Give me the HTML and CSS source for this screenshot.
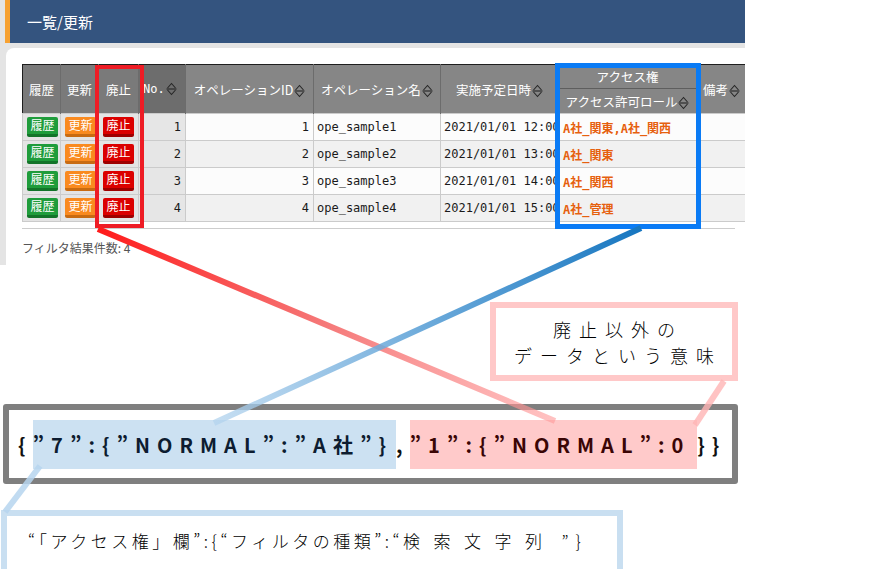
FILE: index.html
```html
<!DOCTYPE html>
<html lang="ja">
<head>
<meta charset="utf-8">
<title>一覧/更新</title>
<link rel="stylesheet" href="styles.css">
</head>
<body>
<div class="page">
  <div class="app">
    <div class="titlebar"><span>一覧/更新</span></div>
    <div class="band"></div>
    <div class="panel">
      <table class="grid">
        <colgroup>
          <col class="c38"><col class="c38"><col class="c40"><col class="c47"><col class="c128"><col class="c127"><col class="c118"><col class="c138"><col class="c60">
        </colgroup>
        <thead>
          <tr class="h1">
            <th rowspan="2" class="hb">履歴</th>
            <th rowspan="2" class="hb">更新</th>
            <th rowspan="2" class="hb">廃止</th>
            <th rowspan="2" class="hno">No.<svg class="sort" viewBox="0 0 11 14"><path d="M1.5 6L5.5 1.5L9.5 6M1.5 8L5.5 12.5L9.5 8"/><path d="M0.5 7H10.5"/></svg></th>
            <th rowspan="2">オペレーションID<svg class="sort" viewBox="0 0 11 14"><path d="M1.5 6L5.5 1.5L9.5 6M1.5 8L5.5 12.5L9.5 8"/><path d="M0.5 7H10.5"/></svg></th>
            <th rowspan="2">オペレーション名<svg class="sort" viewBox="0 0 11 14"><path d="M1.5 6L5.5 1.5L9.5 6M1.5 8L5.5 12.5L9.5 8"/><path d="M0.5 7H10.5"/></svg></th>
            <th rowspan="2">実施予定日時<svg class="sort" viewBox="0 0 11 14"><path d="M1.5 6L5.5 1.5L9.5 6M1.5 8L5.5 12.5L9.5 8"/><path d="M0.5 7H10.5"/></svg></th>
            <th class="grp">アクセス権</th>
            <th rowspan="2" class="memo">備考<svg class="sort" viewBox="0 0 11 14"><path d="M1.5 6L5.5 1.5L9.5 6M1.5 8L5.5 12.5L9.5 8"/><path d="M0.5 7H10.5"/></svg></th>
          </tr>
          <tr class="h2">
            <th class="sub">アクセス許可ロール<svg class="sort" viewBox="0 0 11 14"><path d="M1.5 6L5.5 1.5L9.5 6M1.5 8L5.5 12.5L9.5 8"/><path d="M0.5 7H10.5"/></svg></th>
          </tr>
        </thead>
        <tbody>
          <tr class="odd">
            <td class="bc"><span class="btn green">履歴</span></td>
            <td class="bc"><span class="btn orange">更新</span></td>
            <td class="bc"><span class="btn red">廃止</span></td>
            <td class="num nocell">1</td>
            <td class="num">1</td>
            <td>ope_sample1</td>
            <td>2021/01/01 12:00</td>
            <td class="acc">A社_関東,A社_関西</td>
            <td></td>
          </tr>
          <tr class="even">
            <td class="bc"><span class="btn green">履歴</span></td>
            <td class="bc"><span class="btn orange">更新</span></td>
            <td class="bc"><span class="btn red">廃止</span></td>
            <td class="num nocell">2</td>
            <td class="num">2</td>
            <td>ope_sample2</td>
            <td>2021/01/01 13:00</td>
            <td class="acc">A社_関東</td>
            <td></td>
          </tr>
          <tr class="odd">
            <td class="bc"><span class="btn green">履歴</span></td>
            <td class="bc"><span class="btn orange">更新</span></td>
            <td class="bc"><span class="btn red">廃止</span></td>
            <td class="num nocell">3</td>
            <td class="num">3</td>
            <td>ope_sample3</td>
            <td>2021/01/01 14:00</td>
            <td class="acc">A社_関西</td>
            <td></td>
          </tr>
          <tr class="even">
            <td class="bc"><span class="btn green">履歴</span></td>
            <td class="bc"><span class="btn orange">更新</span></td>
            <td class="bc"><span class="btn red">廃止</span></td>
            <td class="num nocell">4</td>
            <td class="num">4</td>
            <td>ope_sample4</td>
            <td>2021/01/01 15:00</td>
            <td class="acc">A社_管理</td>
            <td></td>
          </tr>
        </tbody>
      </table>
      <div class="rule"></div>
      <div class="count">フィルタ結果件数: 4</div>
    </div>
  </div>

  <div class="mark mark-red"></div>
  <div class="mark mark-blue"></div>

  <div class="note">
    <div class="note-line">廃止以外の</div>
    <div class="note-line">データという意味</div>
  </div>

  <div class="code">
    <span class="plain">{</span><span class="hl-blue">”7”:{”NORMAL”:”A社”}</span><span class="plain">,</span><span class="hl-pink">”1”:{”NORMAL”:0</span><span class="plain">}}</span>
  </div>

  <div class="legend">
    <span>“「アクセス権」欄”:{“フィルタの種類”:“</span><span class="wide">検索文字列</span><span class="tail">”}</span>
  </div>

  <svg class="wires" width="886" height="569" viewBox="0 0 886 569">
    <defs>
      <linearGradient id="gred" gradientUnits="userSpaceOnUse" x1="98" y1="229" x2="555" y2="421">
        <stop offset="0" stop-color="#ff1a1a"/>
        <stop offset="0.5" stop-color="#f46a6a" stop-opacity="0.9"/>
        <stop offset="1" stop-color="#ff9a9a" stop-opacity="0.6"/>
      </linearGradient>
      <linearGradient id="gblue" gradientUnits="userSpaceOnUse" x1="641" y1="228" x2="214" y2="423">
        <stop offset="0" stop-color="#1676c0"/>
        <stop offset="0.5" stop-color="#5ba0d6" stop-opacity="0.9"/>
        <stop offset="1" stop-color="#b4d4ee" stop-opacity="0.75"/>
      </linearGradient>
    </defs>
    <line x1="98" y1="229" x2="555" y2="421" stroke="url(#gred)" stroke-width="6"/>
    <line x1="641" y1="228" x2="214" y2="423" stroke="url(#gblue)" stroke-width="6"/>
    <line x1="724" y1="381" x2="695" y2="425" stroke="#ffb4b4" stroke-opacity="0.8" stroke-width="6"/>
    <line x1="40" y1="466" x2="5" y2="512" stroke="#b6d5ee" stroke-opacity="0.85" stroke-width="6"/>
  </svg>
</div>
</body>
</html>
```

FILE: styles.css
```css
* { box-sizing: border-box; }

body {
  margin: 0;
  background: #ffffff;
  font-family: "Noto Sans CJK JP", "Noto Sans", sans-serif;
  color: #000;
}

.page {
  position: relative;
  width: 886px;
  height: 569px;
  overflow: hidden;
  background: #ffffff;
}

/* ---------- app screenshot ---------- */
.app {
  width: 745px;
  height: 265px;
  background: #e4e4e4;
  overflow: hidden;
  display: flex;
  flex-direction: column;
}

.titlebar {
  height: 43px;
  flex: none;
  margin-left: 5px;
  border-left: 5px solid #f7a130;
  background: #34547f;
  color: #ffffff;
  font-size: 15px;
  display: flex;
  align-items: center;
  padding-left: 17px;
}

.band {
  height: 5px;
  flex: none;
}

.panel {
  flex: 1;
  margin-left: 6px;
  background: #ffffff;
  border-top-left-radius: 8px;
  padding: 16px 0 0 16px;
}

.grid {
  border-collapse: collapse;
  table-layout: fixed;
  width: 734px;
  border-top: 1px solid #1e1e1e;
  border-left: 1px solid #1e1e1e;
  border-bottom: 1px solid #1e1e1e;
  font-family: "DejaVu Sans Mono", "Noto Sans CJK JP", monospace;
  font-size: 12px;
}

.c38 { width: 38px; }
.c40 { width: 40px; }
.c47 { width: 47px; }
.c128 { width: 128px; }
.c127 { width: 127px; }
.c118 { width: 118px; }
.c138 { width: 138px; }
.c60 { width: 98px; }

.grid th {
  background: #868686;
  color: #ffffff;
  font-weight: normal;
  font-size: 12.5px;
  font-family: "Noto Sans CJK JP", sans-serif;
  border-right: 1px solid #6c6c6c;
  border-bottom: 1px dotted #2a2a2a;
  padding: 0 2px;
  white-space: nowrap;
  overflow: hidden;
  text-align: center;
}

.grid .h1 { height: 24px; }
.grid .h2 { height: 25px; }

.grid th.hb { background: #7a7a7a; }
.grid th.hno {
  background: #6d6d6d;
  font-family: "DejaVu Sans Mono", monospace;
  font-size: 12px;
  text-align: left;
  padding-left: 4px;
}

.grid th.grp {
  border-bottom: 1px solid #5e5e5e;
  border-right: 1px solid #a8a8a8;
}
.grid th.sub {
  border-right: 1px solid #a8a8a8;
}
.grid th.memo {
  text-align: left;
  padding-left: 6px;
}

.sort {
  width: 11px;
  height: 14px;
  vertical-align: -3px;
  margin-left: 1px;
  fill: none;
  stroke: #262626;
  stroke-width: 1.1;
}

.grid td {
  height: 27px;
  border: 1px solid #cbcbcb;
  padding: 0 3px;
  white-space: nowrap;
  overflow: hidden;
  color: #1a1a1a;
}

.grid tr.odd td { background: #fcfcfc; }
.grid tr.even td { background: #f1f1f1; }
.grid tr td.bc { background: #e4e4e4; padding: 3px 0 0 4px; vertical-align: top; }
.grid tr td.nocell { background: #e6e6e6; }
.grid td.num { text-align: right; padding-right: 4px; }
.grid td.acc {
  color: #e6600e;
  font-weight: bold;
  padding-left: 4px;
}

.btn {
  display: inline-block;
  width: 31px;
  height: 20px;
  border-radius: 2px;
  color: #ffffff;
  font-family: "Noto Sans CJK JP", sans-serif;
  font-size: 12px;
  line-height: 15px;
  text-align: center;
}
.btn.green { background: #1f9c3b; border-bottom: 3px solid #137429; }
.btn.orange { background: #f98a1f; border-bottom: 3px solid #c86b12; }
.btn.red { background: #db0000; border-bottom: 3px solid #9e0000; }

.rule {
  margin-top: 6px;
  width: 713px;
  height: 1px;
  background: #cdcdcd;
}

.count {
  margin-top: 10px;
  font-size: 12px;
  color: #555555;
}

/* ---------- highlight frames over the app ---------- */
.mark {
  position: absolute;
}
.mark-red {
  left: 95px;
  top: 65px;
  width: 49px;
  height: 163px;
  border: 4px solid #ee1c25;
}
.mark-blue {
  left: 555px;
  top: 63px;
  width: 146px;
  height: 166px;
  border: 5px solid #0a7bf5;
}

/* ---------- annotations ---------- */
.note {
  position: absolute;
  left: 490px;
  top: 302px;
  width: 248px;
  height: 79px;
  border: 6px solid #ffc8c8;
  background: #ffffff;
  display: flex;
  flex-direction: column;
  align-items: center;
  justify-content: center;
  gap: 2px;
  font-size: 18px;
  font-weight: 300;
  line-height: 24px;
  letter-spacing: 8px;
}
.note-line { padding-left: 8px; }

.code {
  position: absolute;
  left: 3px;
  top: 404px;
  width: 735px;
  height: 80px;
  border: 6px solid #7f7f7f;
  border-radius: 3px;
  display: flex;
  align-items: center;
  padding-left: 9px;
  font-size: 20px;
  font-weight: bold;
  letter-spacing: 7px;
  white-space: nowrap;
  color: #111111;
}
.code span {
  line-height: 49px;
}
.hl-blue {
  background: #cce1f2;
  color: #0d1c30;
  padding-right: 3px;
}
.hl-pink {
  background: #ffcaca;
  color: #3a0505;
  padding-right: 7px;
}

.legend {
  position: absolute;
  left: 1px;
  top: 510px;
  width: 622px;
  height: 66px;
  border: 6px solid #c9dff1;
  display: flex;
  align-items: center;
  padding-left: 21px;
  padding-bottom: 6px;
  font-size: 17px;
  font-weight: 300;
  letter-spacing: 3.5px;
  white-space: nowrap;
  color: #000000;
}
.legend .wide {
  letter-spacing: 13.5px;
}
.legend .tail {
  margin-left: 6px;
  letter-spacing: 7px;
}

.wires {
  position: absolute;
  left: 0;
  top: 0;
  pointer-events: none;
}
```
